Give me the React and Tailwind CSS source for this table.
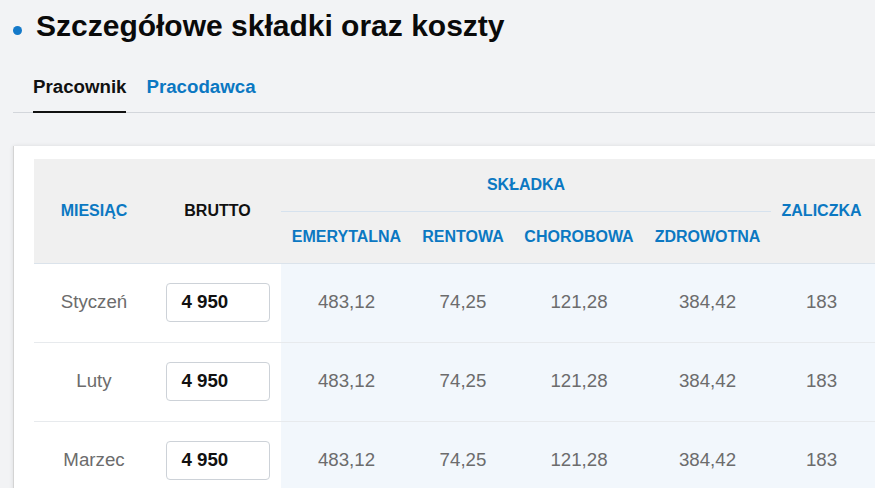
import React from "react";

const rows = [
  { m: "Styczeń" },
  { m: "Luty" },
  { m: "Marzec" },
];

export default function App() {
  return (
    <div
      className="w-[875px] h-[488px] overflow-hidden bg-[#f2f3f5] pl-[13px]"
      style={{ fontFamily: '"Liberation Sans", Arial, sans-serif' }}
    >
      <div className="flex items-start gap-[14px] pt-[9px]">
        <span className="mt-[17px] w-[9px] h-[9px] rounded-full bg-[#1479c9] shrink-0" />
        <h1 className="text-[30px] leading-[34px] font-bold text-[#0a0a0a] whitespace-nowrap">
          Szczegółowe składki oraz koszty
        </h1>
      </div>

      <div className="mt-[33px] flex gap-[20px] pl-[20px] border-b border-[#d3d6db]">
        <div className="-mb-px pb-[13px] border-b-2 border-[#111] text-[18.7px] leading-[22px] font-bold text-[#111]">
          Pracownik
        </div>
        <div className="-mb-px pb-[13px] border-b-2 border-transparent text-[18.7px] leading-[22px] font-bold text-[#0b78c2]">
          Pracodawca
        </div>
      </div>

      <div className="mt-[33px] w-[1000px] bg-white border-l border-[#d4d4d4] shadow-[0_0_4px_rgba(0,0,0,0.10)] pt-[13px] pl-[20px]">
        <table className="table-fixed border-collapse w-[948px]">
          <colgroup>
            <col className="w-[120px]" />
            <col className="w-[127px]" />
            <col className="w-[131px]" />
            <col className="w-[102px]" />
            <col className="w-[130px]" />
            <col className="w-[127px]" />
            <col className="w-[101px]" />
            <col className="w-[110px]" />
          </colgroup>
          <thead className="bg-[#f0f0f0] text-[16px] font-bold">
            <tr className="h-[52px]">
              <th rowSpan={2} className="text-[#0b78c2] font-bold text-center">MIESIĄC</th>
              <th rowSpan={2} className="text-[#111] font-bold text-center">BRUTTO</th>
              <th colSpan={4} className="text-[#0b78c2] font-bold text-center border-b border-[#d6e2ee] pt-[1px]">
                SKŁADKA
              </th>
              <th rowSpan={2} className="text-[#0b78c2] font-bold text-center">ZALICZKA</th>
              <th rowSpan={2} />
            </tr>
            <tr className="h-[52px] border-b border-[#dbe3eb]">
              <th className="text-[#0b78c2] font-bold text-center">EMERYTALNA</th>
              <th className="text-[#0b78c2] font-bold text-center">RENTOWA</th>
              <th className="text-[#0b78c2] font-bold text-center">CHOROBOWA</th>
              <th className="text-[#0b78c2] font-bold text-center">ZDROWOTNA</th>
            </tr>
          </thead>
          <tbody className="text-[18.7px] text-[#6c6c6c]">
            {rows.map((r) => (
              <tr key={r.m} className="h-[79px] border-b border-[#e7eaed]">
                <td className="text-center bg-white">{r.m}</td>
                <td className="bg-white">
                  <div className="mx-auto w-[104px] h-[39px] rounded-[4px] border border-[#cdd2d8] bg-white flex items-center pl-[15px] font-bold text-[18.7px] text-[#111]">
                    4 950
                  </div>
                </td>
                <td className="text-center bg-[#f2f7fc]">483,12</td>
                <td className="text-center bg-[#f2f7fc]">74,25</td>
                <td className="text-center bg-[#f2f7fc]">121,28</td>
                <td className="text-center bg-[#f2f7fc]">384,42</td>
                <td className="text-center bg-[#f2f7fc]">183</td>
                <td className="bg-[#f2f7fc]" />
              </tr>
            ))}
          </tbody>
        </table>
      </div>
    </div>
  );
}
